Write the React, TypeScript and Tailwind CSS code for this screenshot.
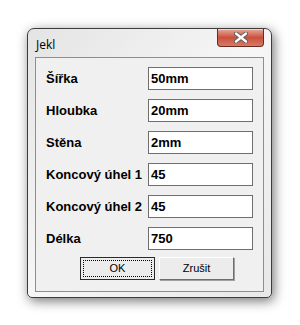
const fields = [
  { label: "Šířka", value: "50mm" },
  { label: "Hloubka", value: "20mm" },
  { label: "Stěna", value: "2mm" },
  { label: "Koncový úhel 1", value: "45" },
  { label: "Koncový úhel 2", value: "45" },
  { label: "Délka", value: "750" },
];

function CloseButton() {
  return (
    <div className="ml-auto h-[18px] w-[47px] rounded-b-[4px] border border-t-0 border-[#6b2a22] bg-gradient-to-b from-[#e7a99c] via-[#c9503e] to-[#d97a63] flex items-center justify-center shadow-[inset_0_1px_0_rgba(255,255,255,0.5)]">
      <svg width="14" height="11" viewBox="0 0 14 11">
        <path
          d="M2 1.5 L12 9.5 M12 1.5 L2 9.5"
          stroke="#5a5a5a"
          strokeWidth="4.2"
          strokeLinecap="round"
        />
        <path
          d="M2 1.5 L12 9.5 M12 1.5 L2 9.5"
          stroke="#ffffff"
          strokeWidth="2.4"
          strokeLinecap="round"
        />
      </svg>
    </div>
  );
}

export default function App() {
  return (
    <div className="w-[300px] h-[325px] bg-white pl-[27px] pt-[28px]">
      <div className="w-[245px] h-[270px] rounded-t-[7px] rounded-b-[5px] border border-[#3c3c3c] bg-gradient-to-br from-[#e4e4e4] via-[#f6f6f6] to-[#e8e8e8] shadow-[2px_3px_12px_rgba(0,0,0,0.55)] flex flex-col px-[7px] pb-[5px]">
        <div className="flex h-[28px] items-start">
          <span
            className="mt-[7px] ml-[1px] text-[12px] text-black"
            style={{ fontFamily: '"Open Sans", "Noto Sans", sans-serif' }}
          >
            Jekl
          </span>
          <CloseButton />
        </div>
        <div
          className="flex-1 border border-[#8e8e8e] bg-[#f0f0f0] pl-[10px] pt-[9px] flex flex-col gap-[9px]"
          style={{ fontFamily: '"Liberation Sans", Arial, sans-serif' }}
        >
          {fields.map((f) => (
            <div key={f.label} className="flex items-center h-[23px]">
              <span className="w-[102px] text-[13px] font-bold text-black whitespace-nowrap">
                {f.label}
              </span>
              <div className="w-[105px] h-[23px] border border-[#6e6e6e] bg-white pl-[2px] flex items-center text-[13px] font-bold text-black">
                {f.value}
              </div>
            </div>
          ))}
          <div className="flex gap-[4px] ml-[34px] -mt-[2px] text-[11px] text-black">
            <div className="w-[75px] h-[23px] border border-[#2b2b2b] bg-[#ececec] p-[2px]">
              <div className="h-full border border-dotted border-black flex items-center justify-center">
                OK
              </div>
            </div>
            <div className="w-[75px] h-[23px] border border-t-white border-l-white border-r-[#6e6e6e] border-b-[#6e6e6e] bg-[#ececec] flex items-center justify-center shadow-[1px_1px_0_#a0a0a0]">
              Zrušit
            </div>
          </div>
        </div>
      </div>
    </div>
  );
}
